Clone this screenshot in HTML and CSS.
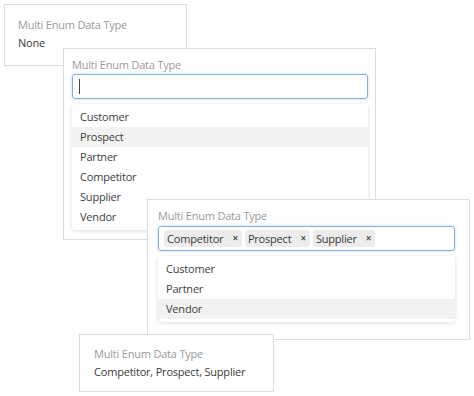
FILE: index.html
```html
<!DOCTYPE html>
<html lang="en">
<head>
    <meta charset="UTF-8">
    <meta name="viewport" content="width=device-width, initial-scale=1.0">
    <title>Multi Enum Data Type</title>
    <link rel="stylesheet" href="styles.css">
</head>
<body>
    <div class="canvas">
        <div class="painel vazio">
            <p class="rotulo">Multi Enum Data Type</p>
            <p class="valor">None</p>
        </div>

        <div class="painel aberto">
            <p class="rotulo">Multi Enum Data Type</p>
            <div class="campo"><span class="cursor"></span></div>
            <ul class="lista">
                <li>Customer</li>
                <li class="ativo">Prospect</li>
                <li>Partner</li>
                <li>Competitor</li>
                <li>Supplier</li>
                <li>Vendor</li>
            </ul>
        </div>

        <div class="painel selecionado">
            <p class="rotulo">Multi Enum Data Type</p>
            <div class="campo">
                <span class="chip">Competitor <b>&times;</b></span>
                <span class="chip">Prospect <b>&times;</b></span>
                <span class="chip">Supplier <b>&times;</b></span>
            </div>
            <ul class="lista">
                <li>Customer</li>
                <li>Partner</li>
                <li class="ativo">Vendor</li>
            </ul>
        </div>

        <div class="painel resultado">
            <p class="rotulo">Multi Enum Data Type</p>
            <p class="valor">Competitor, Prospect, Supplier</p>
        </div>
    </div>
</body>
</html>
```

FILE: styles.css
```css
* {
    box-sizing: border-box;
}

body {
    font-family: "Open Sans", Arial, sans-serif;
    font-size: 11px;
    letter-spacing: -0.2px;
    background-color: #fff;
    margin: 0;
    padding: 0;
}

.canvas {
    position: relative;
    width: 474px;
    height: 396px;
}

.painel {
    position: absolute;
    background: #fff;
    border: 1px solid #dcdcdc;
}

.painel p {
    margin: 0;
    line-height: 18px;
}

.rotulo {
    color: #9a9a9a;
}

.valor {
    color: #3a3a3a;
}

.vazio {
    left: 4px;
    top: 4px;
    width: 183px;
    height: 62px;
    padding: 11px 13px;
}

.aberto {
    left: 63px;
    top: 48px;
    width: 313px;
    height: 192px;
    padding: 7px 7px 0 8px;
}

.selecionado {
    left: 147px;
    top: 199px;
    width: 323px;
    height: 141px;
    padding: 7px 14px 0 10px;
}

.resultado {
    left: 79px;
    top: 334px;
    width: 195px;
    height: 58px;
    padding: 10px 14px;
}

.campo {
    display: flex;
    align-items: center;
    gap: 3px;
    height: 25px;
    margin-top: 1px;
    padding: 0 5px;
    border: 1px solid #7fb0e0;
    border-radius: 3px;
    box-shadow: 0 0 3px rgba(102, 160, 220, 0.45);
}

.aberto .campo {
    margin-top: 0;
}

.cursor {
    width: 1px;
    height: 15px;
    background: #444;
    margin-left: 1px;
}

.chip {
    display: flex;
    align-items: center;
    height: 17px;
    padding: 0 4px 0 3px;
    background: #ececec;
    border-radius: 3px;
    color: #3a3a3a;
    line-height: 17px;
}

.chip b {
    font-size: 10px;
    font-weight: bold;
    color: #555;
    margin-left: 9px;
}

.lista {
    list-style: none;
    margin: 5px 0 0 0;
    padding: 3px 0;
    background: #fff;
    border-radius: 3px;
    box-shadow: 0 1px 4px rgba(0, 0, 0, 0.14);
}

.lista li {
    height: 20px;
    line-height: 20px;
    padding-left: 8px;
    color: #404040;
}

.lista li.ativo {
    background: #f2f2f2;
}
```
